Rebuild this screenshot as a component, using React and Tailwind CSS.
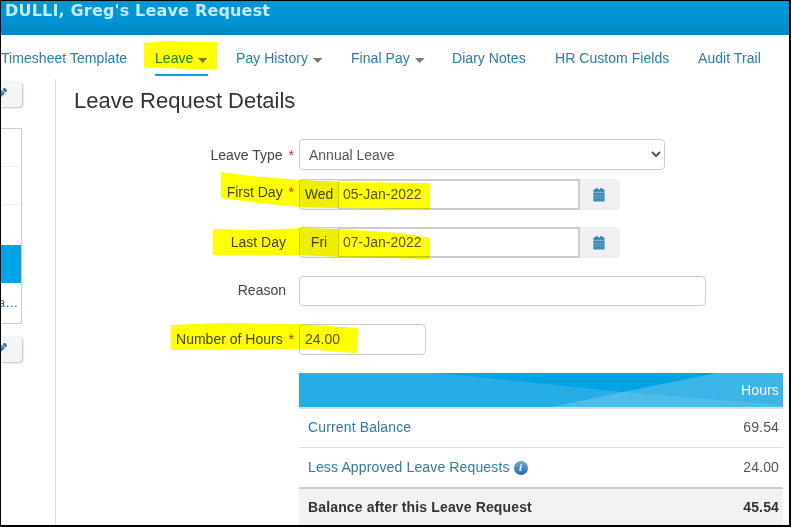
import React from 'react'
import { FaPencilAlt } from 'react-icons/fa'

const Caret = () => (
  <svg width="10" height="5" viewBox="0 0 10 5" className="ml-[5px] mt-[9px] inline-block">
    <path d="M0 0h9.5L4.75 5z" fill="#7a7a7a" />
  </svg>
)

const CalendarIcon = () => (
  <svg width="12" height="14" viewBox="0 0 13 15" className="mr-[2px]">
    <rect x="0.5" y="1.5" width="12" height="13" fill="#2d84ad" />
    <rect x="3" y="0" width="2" height="3" fill="#2d84ad" />
    <rect x="8" y="0" width="2" height="3" fill="#2d84ad" />
    <rect x="0.5" y="4" width="12" height="1" fill="#a9d0e2" />
    <path d="M3 6v8M5.5 6v8M8 6v8M10.5 6v8M0.5 8h12M0.5 10.5h12" stroke="#6fa9c6" strokeWidth="0.7" />
  </svg>
)

const InfoIcon = () => (
  <span className="ml-[4px] inline-flex h-[14px] w-[14px] items-center justify-center rounded-full bg-gradient-to-b from-[#6aa9d8] to-[#1f6fae] font-['Liberation_Serif',serif] text-[11px] font-bold italic leading-none text-white">
    i
  </span>
)

// labels without the red star still keep its space on the right
const Label = ({ children, required, className }) => (
  <label className={`block w-[238px] shrink-0 text-right text-[14px] leading-[20px] text-[#444] ${required ? '' : 'pr-[8px]'} ${className}`}>
    {children}
    {required && <span className="ml-[2px] text-[#c9302c]"> *</span>}
  </label>
)

const DayField = ({ label, required, day, date, className, labelPad }) => (
  <div className={`flex items-start ${className}`}>
    <Label required={required} className={labelPad}>{label}</Label>
    <div className="ml-[5px] flex h-[31px]">
      <div className="flex w-[39px] items-center justify-center rounded-l-[4px] border border-r-0 border-[#ccc] bg-[#eee] text-[14px] text-[#444]">
        {day}
      </div>
      <div className="flex w-[242px] items-center border-2 border-l border-[#ccc] pl-[4px] text-[14px] text-[#555]">
        {date}
      </div>
      <div className="flex w-[40px] items-center justify-center rounded-r-[4px] bg-[#f0f0f0]">
        <CalendarIcon />
      </div>
    </div>
  </div>
)

const EditButton = ({ className }) => (
  <div className={`flex h-[26px] w-[21px] items-center justify-end overflow-hidden rounded-r-[4px] bg-[#f5f5f5] pr-[15px] shadow-[1px_1px_2px_rgba(0,0,0,0.25)] ${className}`}>
    <FaPencilAlt className="shrink-0 text-[12px] text-[#2b7da6]" />
  </div>
)

const navItems = [
  { label: 'Timesheet Template', w: 'w-[154px]' },
  { label: 'Leave', w: 'w-[81px]', caret: true, active: true },
  { label: 'Pay History', w: 'w-[115px]', caret: true },
  { label: 'Final Pay', w: 'w-[101px]', caret: true },
  { label: 'Diary Notes', w: 'w-[103px]' },
  { label: 'HR Custom Fields', w: 'w-[143px]' },
  { label: 'Audit Trail', w: 'w-auto' },
]

export default function App() {
  return (
    <div className="relative h-[527px] w-[791px] overflow-hidden border-t border-r-2 border-b-2 border-l border-black bg-white font-['Liberation_Sans',sans-serif]">
      {/* Title bar */}
      <div className="h-[34px] bg-gradient-to-b from-[#0096d6] via-[#0096d6] to-[#0087c0] pl-[4px] font-['DejaVu_Sans',sans-serif] text-[16px] font-bold leading-[20px] tracking-[0.18px] text-[#c6e9f8]">
        DULLI, Greg's Leave Request
      </div>

      {/* Tabs */}
      <div className="flex h-[42px] text-[14px] text-[#2b7da6]">
        {navItems.map((item) => (
          <div key={item.label} className={`${item.w} shrink-0 pt-[14px] leading-[18px]`}>
            <span className={`inline-flex h-[27px] items-start whitespace-nowrap tracking-[0.05px] ${item.active ? 'border-b-2 border-[#00a3e0]' : ''}`}>
              {item.label}
              {item.caret && <Caret />}
            </span>
          </div>
        ))}
      </div>

      <div className="flex pt-[2px]">
        {/* Sidebar, cut off on the left */}
        <div className="h-[450px] w-[55px] shrink-0 border-r border-[#ddd] pt-[2px]">
          <EditButton />
          <div className="mt-[21px] h-[196px] w-[21px] overflow-hidden border border-l-0 border-[#ccc] text-[13px]">
            <div className="h-[38px] border-b border-[#eee]" />
            <div className="h-[38px] border-b border-[#eee]" />
            <div className="h-[40px]" />
            <div className="h-[38px] bg-[#00a3e4]" />
            <div className="-ml-[3px] h-[39px] pt-[11px] leading-[18px] text-[#2b7da6]">a…</div>
          </div>
          <EditButton className="mt-[12px]" />
        </div>

        {/* Main panel */}
        <div className="min-w-0 flex-1">
          <div className="pl-[18px] pt-[10px] text-[22px] leading-[24px] text-[#333]">Leave Request Details</div>

          <div className="mt-[26px] text-[14px]">
            <div className="flex items-start">
              <Label required className="pt-[6px]">Leave Type</Label>
              <select className="ml-[5px] h-[31px] w-[366px] rounded-[4px] border border-[#ccc] bg-white pl-[5px] text-[14px] text-[#555]">
                <option>Annual Leave</option>
              </select>
            </div>

            <DayField className="mt-[9px]" labelPad="pt-[3px]" label="First Day" required day="Wed" date="05-Jan-2022" />
            <DayField className="mt-[17px]" labelPad="pt-[5px]" label="Last Day" day="Fri" date="07-Jan-2022" />

            <div className="mt-[18px] flex items-start">
              <Label className="pt-[4px]">Reason</Label>
              <div className="ml-[5px] h-[30px] w-[407px] rounded-[4px] border border-[#ccc]" />
            </div>

            <div className="mt-[18px] flex items-start">
              <Label required className="pt-[5px]">Number of Hours</Label>
              <div className="ml-[5px] flex h-[31px] w-[127px] items-center rounded-[4px] border border-[#ccc] pl-[5px] text-[#555]">
                24.00
              </div>
            </div>

            {/* Balance table */}
            <div className="ml-[243px] mt-[18px] w-[484px] text-[14px] tracking-[0.14px]">
              <div className="relative flex h-[36px] items-center justify-end overflow-hidden border-b-2 border-[#ddd] bg-[#26ace6] pr-[4px] text-white">
                <svg className="absolute inset-0" width="484" height="34" viewBox="0 0 484 34">
                  <path d="M141 0L324 19L418 0z" fill="#00a3e4" />
                  <path d="M253 34L324 19L418 0H484V34z" fill="#3bb4e8" />
                  <path d="M253 34L324 19L484 32V34z" fill="#4fbbeb" />
                </svg>
                <span className="relative">Hours</span>
              </div>
              <div className="flex h-[39px] items-center justify-between border-b border-[#ddd] pb-[1px] pl-[9px] pr-[4px]">
                <span className="text-[#2b7da6]">Current Balance</span>
                <span className="text-[#555]">69.54</span>
              </div>
              <div className="flex h-[41px] items-center justify-between border-b-2 border-[#ccc] pl-[9px] pr-[4px]">
                <span className="flex items-center text-[#2b7da6]">
                  Less Approved Leave Requests
                  <InfoIcon />
                </span>
                <span className="text-[#555]">24.00</span>
              </div>
              <div className="flex h-[37px] items-center justify-between bg-[#f2f2f2] pl-[9px] pr-[4px] font-bold text-[#333]">
                <span>Balance after this Leave Request</span>
                <span>45.54</span>
              </div>
            </div>
          </div>
        </div>
      </div>

      {/* Highlighter marks drawn over the screenshot */}
      <svg className="pointer-events-none absolute -left-px -top-px mix-blend-multiply" width="791" height="527" viewBox="0 0 791 527">
        <g fill="#ffff00">
          <path d="M144 43L165 41L190 42L217 42L217 69L190 69L165 68L144 67z" />
          <path d="M221 172L250 176L300 180L340 182L430 183L430 209L340 208L300 207L250 202L221 198z" />
          <path d="M213 229L260 230L300 228L340 229L400 233L430 238L430 259L340 257L300 255L213 255z" />
          <path d="M171 325L220 323L300 324L358 328L357 353L300 349L220 350L171 350z" />
        </g>
      </svg>
    </div>
  )
}
